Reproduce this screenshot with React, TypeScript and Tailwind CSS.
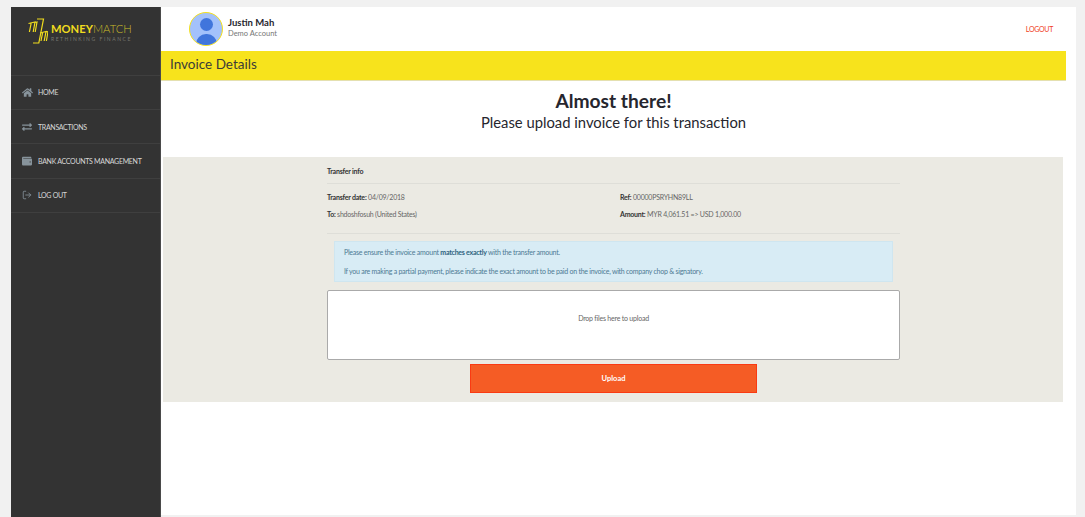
import { FaExchangeAlt, FaHome, FaWallet } from "react-icons/fa";
import { LogOut } from "lucide-react";

const navItems = [
  { label: "HOME", icon: FaHome, size: 11 },
  { label: "TRANSACTIONS", icon: FaExchangeAlt, size: 10 },
  { label: "BANK ACCOUNTS MANAGEMENT", icon: FaWallet, size: 10 },
  { label: "LOG OUT", icon: LogOut, size: 10 },
];

function Logo() {
  return (
    <div className="flex items-center gap-[3px]">
      <svg width="20" height="26" viewBox="0 0 20 26" fill="none" stroke="#f0dc1e" strokeWidth="1.2">
        <path d="M0.5 5.5 L7 4 L5.2 14 M3.2 5.2 L1.4 14 M7 4.5 L9 4 L7.2 14" />
        <path d="M9 1 L15.5 1 L10.8 25 L5 25" />
        <path d="M12 15 L18 13.5 L16.2 23 M14.6 14.8 L13 23 M18 14 L20 13.5 L18.4 23" />
      </svg>
      <div className="flex flex-col gap-[1px] pt-[3px]">
        <div className="text-[11.2px] leading-[12px] text-[#f0dc1e]">
          <span className="font-bold">MONEY</span>
          <span className="font-light text-[#c9bb2a]">MATCH</span>
        </div>
        <div className="text-[5px] leading-[6px] tracking-[1.55px] whitespace-nowrap text-[#77776f]">RETHINKING FINANCE</div>
      </div>
    </div>
  );
}

function Sidebar() {
  return (
    <aside className="h-[510px] w-[150px] shrink-0 border-r border-[#4a4a4a] bg-[#333333]">
      <div className="flex h-[68px] items-start pl-[17px] pt-[11px]">
        <Logo />
      </div>
      <nav className="border-t border-[#3f3f3f]">
        {navItems.map((item) => (
          <div key={item.label} className="flex h-[34.2px] items-center border-b border-[#3f3f3f] pl-[11px]">
            <span className="flex w-[16px] shrink-0 text-[#87939b]">
              <item.icon size={item.size} />
            </span>
            <span className="text-[7px] tracking-[-0.3px] whitespace-nowrap text-[#d8d8d8]">{item.label}</span>
          </div>
        ))}
      </nav>
    </aside>
  );
}

function Header() {
  return (
    <header className="flex h-[44px] items-center justify-between pl-[28px] pr-[23px]">
      <div className="flex items-center gap-[5px]">
        <div className="relative size-[34px] overflow-hidden rounded-full border border-[#f5e11d] bg-[#a3c1fb]">
          <div className="absolute left-[10px] top-[5px] size-[13px] rounded-full bg-[#4075dc]" />
          <div className="absolute left-[6px] top-[21px] h-[14px] w-[21px] rounded-t-[10px] bg-[#4075dc]" />
        </div>
        <div className="flex flex-col pb-[3px]">
          <span className="text-[9.5px] leading-[13px] font-bold text-[#26262e]">Justin Mah</span>
          <span className="text-[7.5px] leading-[10px] text-[#777777]">Demo Account</span>
        </div>
      </div>
      <a className="text-[7px] tracking-[-0.3px] text-[#f0401f]">LOGOUT</a>
    </header>
  );
}

function TransferInfo() {
  return (
    <div className="text-[7px] tracking-[-0.22px] text-[#666666]">
      <div className="flex h-[26px] items-center border-b border-[#deded8] pt-[1px] font-bold text-[#333333]">Transfer info</div>
      <div className="flex h-[50px] border-b border-[#deded8] pt-[8px]">
        <div className="w-[293px]">
          <p className="h-[17px] leading-[10px]">
            <b className="text-[#333333]">Transfer date:</b> 04/09/2018
          </p>
          <p className="leading-[10px]">
            <b className="text-[#333333]">To:</b> shdoshfosuh (United States)
          </p>
        </div>
        <div>
          <p className="h-[17px] leading-[10px]">
            <b className="text-[#333333]">Ref:</b> 00000PSRYHN89LL
          </p>
          <p className="leading-[10px]">
            <b className="text-[#333333]">Amount:</b> MYR 4,061.51 =&gt; USD 1,000.00
          </p>
        </div>
      </div>
    </div>
  );
}

export default function App() {
  return (
    <div className="h-[517px] overflow-hidden bg-[#f1f1f1] pl-[11px] pt-[7px] pr-[9px] font-['Lato',sans-serif]">
      <div className="flex items-start">
        <Sidebar />
        <main className="h-[508px] flex-1 bg-white">
          <Header />
          <div className="mr-[10px] flex h-[30px] items-center border-b border-[#e4e0b0] bg-[#f7e31c] pb-[3px] pl-[9px] text-[13.5px] text-[#3c3c38]">
            Invoice Details
          </div>
          <div className="mr-[10px] flex flex-col items-center pt-[8px] text-[#26262e]">
            <h1 className="text-[19.2px] leading-[24px] font-bold">Almost there!</h1>
            <p className="text-[14.8px] leading-[19px]">Please upload invoice for this transaction</p>
          </div>
          <section className="mt-[25px] mr-[13px] ml-[2px] h-[245px] bg-[#ebeae3] pl-[164px] pr-[163px] pt-[1px]">
            <TransferInfo />
            <div className="mx-[7px] mt-[7px] h-[41px] border border-[#cfe6f0] bg-[#d8ecf5] pl-[9px] pt-[5px] text-[7px] leading-[10px] tracking-[-0.25px] text-[#4d7a94]">
              <p className="mb-[9px]">
                Please ensure the invoice amount <b className="text-[#2f6480]">matches exactly</b> with the transfer amount.
              </p>
              <p>If you are making a partial payment, please indicate the exact amount to be paid on the invoice, with company chop &amp; signatory.</p>
            </div>
            <div className="mt-[8px] flex h-[70px] items-center justify-center rounded-[2px] border border-[#aaaaaa] bg-white pb-[14px] text-[7px] tracking-[-0.22px] text-[#666666]">
              Drop files here to upload
            </div>
            <div className="mt-[4px] flex justify-center">
              <button className="h-[29px] w-[287px] border border-[#fa3a12] bg-[#f55c25] text-[7.5px] font-bold text-white">
                Upload
              </button>
            </div>
          </section>
        </main>
      </div>
    </div>
  );
}
